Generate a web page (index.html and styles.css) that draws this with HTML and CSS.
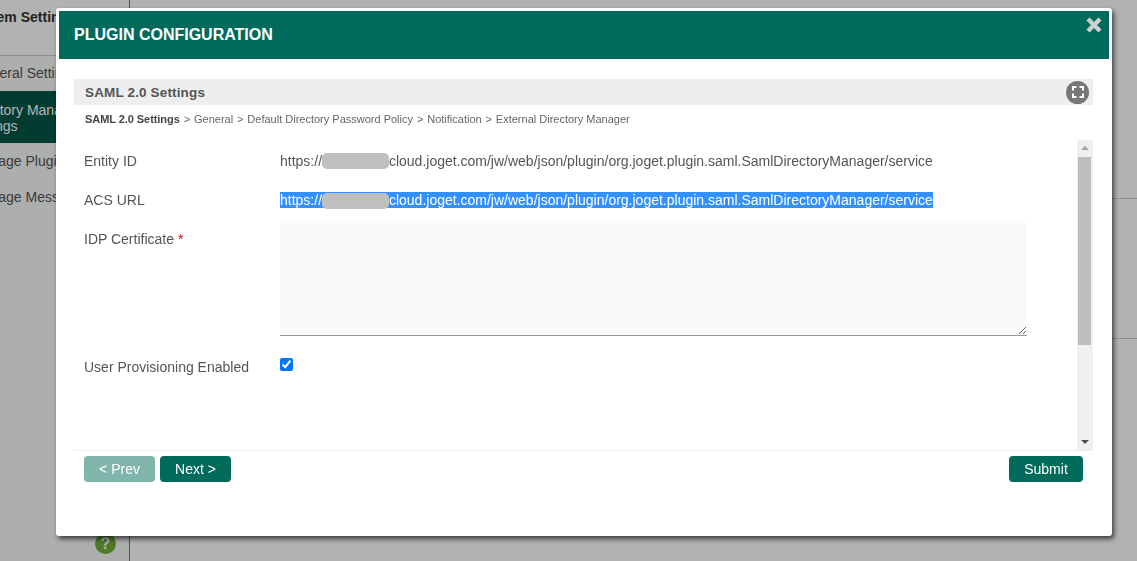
FILE: index.html
```html
<!DOCTYPE html>
<html lang="en">
<head>
<meta charset="utf-8">
<title>Plugin Configuration</title>
<link rel="stylesheet" href="styles.css">
</head>
<body>
<div class="page">
  <aside class="sidebar">
    <div class="side-title"><span class="side-text title-text">System Settings</span></div>
    <ul class="side-menu">
      <li class="side-item"><span class="side-text general">General Settings</span></li>
      <li class="side-item active"><span class="side-text directory">Directory Manager Settings</span></li>
      <li class="side-item"><span class="side-text manage">Manage Plugins</span></li>
      <li class="side-item"><span class="side-text manage">Manage Messages</span></li>
    </ul>
    <div class="help">?</div>
  </aside>
  <main class="main">
    <div class="main-row"></div>
    <div class="main-row tall"></div>
    <div class="main-row"></div>
  </main>
</div>
<div class="overlay"></div>
<section class="modal">
  <header class="modal-head">
    <h1>PLUGIN CONFIGURATION</h1>
    <svg class="close" width="16" height="16" viewBox="0 0 16 16" fill="none" stroke="#cfcfcf" stroke-width="4.4">
      <path d="M2 2l12 12M14 2L2 14"/>
    </svg>
  </header>
  <div class="modal-body">
    <div class="section-bar">
      <span>SAML 2.0 Settings</span>
      <span class="fullscreen">
        <svg width="14" height="14" viewBox="0 0 14 14" fill="none" stroke="#fff" stroke-width="2">
          <path d="M2 5.5V2h3.5M8.500 2H12v3.500M12 8.500V12H8.500M5.500 12H2V8.500"/>
        </svg>
      </span>
    </div>
    <nav class="crumbs">
      <b>SAML 2.0 Settings</b><i>&gt;</i><span>General</span><i>&gt;</i><span>Default Directory Password Policy</span><i>&gt;</i><span>Notification</span><i>&gt;</i><span>External Directory Manager</span>
    </nav>
    <div class="scroller">
      <div class="form">
        <div class="field">
          <label>Entity ID</label>
          <div class="value">https://t<span class="redact">xxxxxx</span>cloud.joget.com/jw/web/json/plugin/org.joget.plugin.saml.SamlDirectoryManager/service</div>
        </div>
        <div class="field">
          <label>ACS URL</label>
          <div class="value"><span class="selected">https://t<span class="redact">xxxxxx</span>cloud.joget.com/jw/web/json/plugin/org.joget.plugin.saml.SamlDirectoryManager/service</span></div>
        </div>
        <div class="field cert">
          <label>IDP Certificate <em>*</em></label>
          <textarea class="area"></textarea>
        </div>
        <div class="field">
          <label>User Provisioning Enabled</label>
          <input class="check" type="checkbox" checked>
        </div>
      </div>
      <div class="scrollbar">
        <span class="arrow up"></span>
        <span class="thumb"></span>
        <span class="arrow down"></span>
      </div>
    </div>
    <footer class="actions">
      <div class="nav-btns">
        <button class="btn faded">&lt; Prev</button>
        <button class="btn">Next &gt;</button>
      </div>
      <button class="btn submit">Submit</button>
    </footer>
  </div>
</section>
</body>
</html>
```
FILE: styles.css
```css
* { box-sizing: border-box; }
html, body { margin: 0; height: 100%; overflow: hidden; }
body { font-family: "Liberation Sans", Arial, sans-serif; color: #555; background: #fff; }

.page { display: flex; height: 561px; }
.sidebar { position: relative; width: 130px; flex: none; background: #f7fbfa; border-right: 1px solid #777; overflow: hidden; }
.side-text { display: block; white-space: nowrap; }
.side-title { height: 56px; padding-top: 7px; background: #fff; border-bottom: 1px solid #ccc; font-size: 14px; font-weight: bold; color: #333; line-height: 20px; }
.title-text { margin-left: -33px; }
.side-menu { list-style: none; margin: 0; padding: 0; }
.side-item { padding-top: 10px; height: 36px; font-size: 14px; line-height: 17px; color: #555; }
.side-item:first-child { height: 35px; padding-top: 9px; }
.general { margin-left: -27px; }
.manage { margin-left: -29px; }
.side-item.active { height: 52px; background: #045546; color: #fff; padding-top: 11px; }
.directory { width: 150px; margin-left: -33px; white-space: normal; line-height: 16px; }
.help { position: absolute; left: 95px; top: 533px; width: 21px; height: 21px; border-radius: 50%; background: #70b03c; color: #fff; font-size: 16px; font-weight: bold; text-align: center; line-height: 21px; }

.main { flex: 1; background: #fff; }
.main-row { height: 199px; border-bottom: 1px solid #ccc; }
.main-row.tall { height: 140px; }
.main-row:last-child { border: 0; height: auto; }

.overlay { position: fixed; inset: 0; background: rgba(0, 0, 0, 0.3); }

.modal { position: absolute; left: 56px; top: 8px; width: 1056px; height: 528px; background: #fff; border-radius: 3px; box-shadow: 2px 3px 5px rgba(0, 0, 0, 0.65); padding: 3px; }
.modal-head { position: relative; height: 48px; background: #006b5b; color: #fff; padding: 0 15px; display: flex; align-items: center; }
.modal-head h1 { margin: 0; font-size: 16px; font-weight: bold; line-height: 46px; }
.close { position: absolute; right: 7px; top: 6px; display: block; }

.modal-body { padding: 20px 16px 0 15px; }
.section-bar { height: 26px; background: #eee; display: flex; align-items: center; justify-content: space-between; padding: 0 4px 0 11px; font-size: 13.5px; font-weight: bold; letter-spacing: 0.15px; color: #555; }
.fullscreen { width: 23px; height: 23px; border-radius: 50%; background: #777; display: flex; align-items: center; justify-content: center; }
.fullscreen svg { display: block; }
.crumbs { height: 35px; padding: 7px 0 0 11px; font-size: 11px; line-height: 14px; color: #666; white-space: nowrap; }
.crumbs b { color: #444; letter-spacing: -0.06px; }
.crumbs i { font-style: normal; margin: 0 3.9px; }

.scroller { display: flex; height: 311px; border-bottom: 1px solid #eee; }
.form { flex: 1; min-width: 0; padding: 0 10px; }
.field { display: flex; height: 39px; padding-top: 12px; font-size: 14px; line-height: 18px; }
.field label { width: 196px; flex: none; color: #555; }
.field em { font-style: normal; color: #d00; }
.value { white-space: nowrap; color: #555; }
.selected { background: #3390ff; color: #fff; display: inline-block; height: 16px; line-height: 16px; margin-top: 1px; }
.redact { position: relative; display: inline-block; width: 67px; height: 16px; margin: 1px 0 0 -4px; color: transparent; overflow: hidden; vertical-align: top; }
.redact::after { content: ""; position: absolute; inset: 0; background: #bfbfbf; border-radius: 5px; }
.field.cert { height: 128px; }
.area { display: block; width: 747px; height: 113px; margin: -7px 0 0 0; background: #f9f9f9; border: 0; border-bottom: 1px solid #999; border-radius: 0; outline: 0; resize: both; }
.check { width: 13px; height: 13px; margin: 0; accent-color: #0075ff; }

.scrollbar { position: relative; width: 16px; flex: none; background: #f0f0f0; }
.thumb { position: absolute; left: 1px; top: 17px; width: 13px; height: 188px; background: #bdbdbd; }
.arrow { position: absolute; left: 4px; width: 0; height: 0; border-left: 4px solid transparent; border-right: 4px solid transparent; }
.arrow.up { top: 6px; border-bottom: 4px solid #a3a3a3; }
.arrow.down { bottom: 6px; border-top: 4px solid #505050; }

.actions { display: flex; justify-content: space-between; padding: 5px 10px 0; }
.nav-btns { display: flex; gap: 5px; }
.btn { width: 71px; height: 26px; padding: 0; background: #006b5b; color: #fff; border: 0; border-radius: 4px; font-family: inherit; font-size: 14px; line-height: 26px; }
.btn.faded { background: #80b5ac; }
.btn.submit { width: 74px; }
```
